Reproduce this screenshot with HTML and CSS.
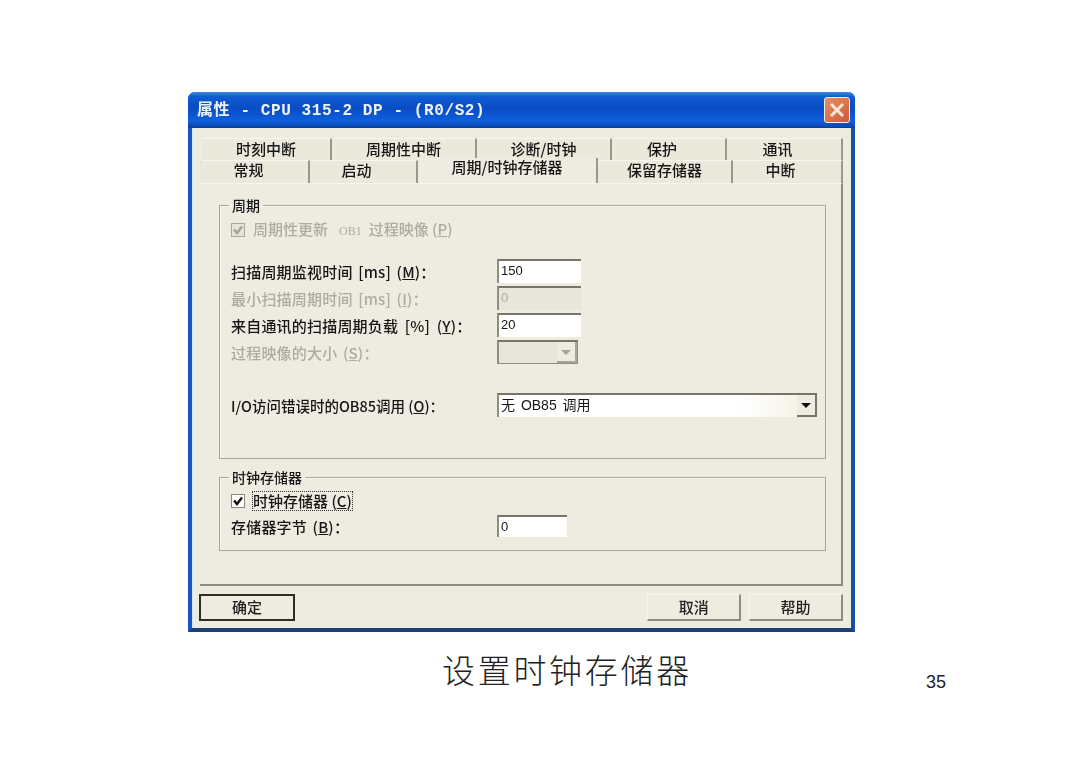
FILE: index.html
```html
<!DOCTYPE html>
<html lang="zh-CN">
<head>
    <meta charset="UTF-8">
    <title>设置时钟存储器</title>
    <link rel="stylesheet" href="styles.css">
</head>
<body>
    <div class="window">
        <div class="titlebar">
            <span class="title-text">属性 - CPU 315-2 DP - (R0/S2)</span>
            <div class="close-btn">
                <svg width="18" height="18" viewBox="0 0 18 18"><path d="M3 3 L15 15 M15 3 L3 15" stroke="#f6e6d8" stroke-width="3" fill="none"/></svg>
            </div>
        </div>
        <div class="window-body">
            <div class="tab-row tab-row-back">
                <div class="tab">时刻中断</div>
                <div class="tab">周期性中断</div>
                <div class="tab">诊断/时钟</div>
                <div class="tab tab-left">保护</div>
                <div class="tab tab-left">通讯</div>
            </div>
            <div class="tab-row tab-row-front">
                <div class="tab tab-left">常规</div>
                <div class="tab tab-left">启动</div>
                <div class="tab tab-active">周期/时钟存储器</div>
                <div class="tab">保留存储器</div>
                <div class="tab tab-left">中断</div>
            </div>
            <div class="panel">
                <fieldset class="group group-cycle">
                    <legend>周期</legend>
                    <div class="check-row disabled">
                        <span class="checkbox checkbox-off">
                            <svg width="14" height="14" viewBox="0 0 14 14"><path d="M3 6.5 L6 10 L11 3.5" stroke="#a5a296" stroke-width="2.4" fill="none"/></svg>
                        </span>
                        <span>周期性更新<span class="small">OB1</span>过程映像 (<u>P</u>)</span>
                    </div>
                    <div class="form-rows">
                        <div class="form-row">
                            <label>扫描周期监视时间 [ms] (<u>M</u>)：</label>
                            <div class="input input-wide">150</div>
                        </div>
                        <div class="form-row disabled">
                            <label>最小扫描周期时间 [ms] (<u>I</u>)：</label>
                            <div class="input input-wide input-off">0</div>
                        </div>
                        <div class="form-row">
                            <label class="label-wide">来自通讯的扫描周期负载 [%] (<u>Y</u>)：</label>
                            <div class="input input-wide">20</div>
                        </div>
                        <div class="form-row disabled">
                            <label>过程映像的大小 (<u>S</u>)：</label>
                            <div class="input combo-small input-off">
                                <span class="combo-btn combo-btn-off"></span>
                            </div>
                        </div>
                        <div class="form-row form-row-gap">
                            <label class="label-tight">I/O访问错误时的OB85调用 (<u>O</u>)：</label>
                            <div class="input combo-big">
                                无 OB85 调用
                                <span class="combo-btn"></span>
                            </div>
                        </div>
                    </div>
                </fieldset>
                <fieldset class="group group-clock">
                    <legend>时钟存储器</legend>
                    <div class="check-row">
                        <span class="checkbox">
                            <svg width="14" height="14" viewBox="0 0 14 14"><path d="M3 6.5 L6 10 L11 3.5" stroke="#111" stroke-width="2.4" fill="none"/></svg>
                        </span>
                        <span class="focused">时钟存储器 (<u>C</u>)</span>
                    </div>
                    <div class="form-row form-row-clock">
                        <label>存储器字节 (<u>B</u>)：</label>
                        <div class="input input-narrow">0</div>
                    </div>
                </fieldset>
            </div>
            <div class="button-row">
                <button class="btn btn-default">确定</button>
                <div class="button-spacer"></div>
                <button class="btn">取消</button>
                <button class="btn">帮助</button>
            </div>
        </div>
    </div>
    <div class="caption-row">
        <div class="caption">设置时钟存储器</div>
        <div class="page-num">35</div>
    </div>
</body>
</html>
```

FILE: styles.css
```css
html, body {
    margin: 0;
    padding: 0;
}

body {
    width: 1080px;
    height: 764px;
    overflow: hidden;
    background-color: #fff;
    padding-top: 92px;
    box-sizing: border-box;
    font-family: "Noto Sans CJK SC", "Liberation Sans", sans-serif;
    color: #161616;
}

.window {
    width: 667px;
    height: 540px;
    margin-left: 188px;
    box-sizing: border-box;
    border: 4px solid #1557c4;
    border-top: 0;
    border-bottom-color: #1d3f78;
    border-right-color: #1a4fa8;
    border-radius: 7px 7px 0 0;
    background-color: #eeebe0;
    display: flex;
    flex-direction: column;
    filter: blur(0.4px);
}

.titlebar {
    height: 36px;
    margin: 0 -4px;
    padding: 0 5px 0 9px;
    display: flex;
    justify-content: space-between;
    align-items: center;
    border-radius: 7px 7px 0 0;
    background: linear-gradient(#3d8be6 0, #0f5cd2 12%, #0a4cc4 45%, #0f5fdc 80%, #0b47b0 96%, #0a3a90 100%);
}

.title-text {
    font-family: "Liberation Mono", "Noto Sans CJK SC", monospace;
    font-weight: bold;
    font-size: 16px;
    letter-spacing: 0.6px;
    color: #eef4fb;
    padding-bottom: 4px;
}

.close-btn {
    width: 24px;
    height: 24px;
    border: 1px solid #f3ede4;
    border-radius: 3px;
    background: linear-gradient(135deg, #e69068, #cf5a35);
    display: flex;
    align-items: center;
    justify-content: center;
}

.window-body {
    flex: 1;
    padding: 10px 8px 0;
    display: flex;
    flex-direction: column;
    box-shadow: inset 1px 0 0 #d6e2f0;
}

.tab-row {
    display: grid;
    padding-left: 2px;
    font-size: 15px;
    font-weight: 500;
    text-align: center;
    width: 641px;
}

.tab-row-back {
    height: 22px;
    line-height: 19px;
    grid-template-columns: 130px 145px 135px 115px 116px;
}

.tab-row-front {
    height: 23px;
    line-height: 18px;
    grid-template-columns: 108px 108px 180px 135px 110px;
    background-color: #eae7db;
}

.tab {
    border-right: 2px solid #9a978b;
    box-sizing: border-box;
    background-color: #ebe8dc;
    border-top: 1px solid #f7f6f0;
}

.tab-left {
    padding-right: 13px;
}

.tab-active {
    background-color: #eeebe0;
    margin-top: -2px;
    border-top: 0;
}

.panel {
    height: 403px;
    box-sizing: border-box;
    padding: 13px 15px 0 19px;
    margin-right: 0;
    border-right: 2px solid #8f8c80;
    border-bottom: 2px solid #8f8c80;
    border-top: 1px solid #f6f5ef;
    display: flex;
    flex-direction: column;
    gap: 10px;
}

.group {
    margin: 0;
    padding: 7px 11px 0;
    border: 1px solid #a9a698;
    box-shadow: inset 1px 1px 0 #f7f6f0;
    font-size: 15px;
    font-weight: 500;
    min-width: 0;
}

.group legend {
    padding: 0 3px;
    margin-left: -2px;
    font-size: 14px;
    line-height: 16px;
}

.group-cycle {
    height: 262px;
    box-sizing: border-box;
}

.group-clock {
    height: 82px;
    box-sizing: border-box;
    padding-top: 6px;
}

.check-row {
    height: 20px;
    display: flex;
    align-items: center;
    gap: 8px;
    line-height: 20px;
}

.checkbox {
    width: 14px;
    height: 14px;
    flex-shrink: 0;
    background-color: #fff;
    border: 1px solid #8a887c;
    box-sizing: border-box;
    display: flex;
    align-items: center;
    justify-content: center;
}

.checkbox svg {
    flex-shrink: 0;
}

.checkbox-off {
    background-color: #e6e3d7;
    border-color: #aaa79a;
}

.focused {
    outline: 1px dotted #333;
    line-height: 18px;
}

.small {
    font-family: "Liberation Serif", serif;
    font-size: 12px;
    margin: 0 7px 0 11px;
}

.form-rows {
    margin-top: 19px;
    display: flex;
    flex-direction: column;
    gap: 3px;
}

.form-row {
    height: 24px;
    display: grid;
    grid-template-columns: 266px 1fr;
    align-items: center;
}

.form-row label {
    letter-spacing: 0.2px;
    word-spacing: 2px;
}

.form-row .label-wide {
    word-spacing: 3px;
}

.form-row .label-tight {
    letter-spacing: 0;
    word-spacing: 0;
    font-size: 14.5px;
}

.form-row-gap {
    margin-top: 26px;
}

.form-row-clock {
    margin-top: 3px;
}

.disabled {
    color: #aeaba0;
}

.input {
    height: 24px;
    box-sizing: border-box;
    background-color: #fff;
    border-top: 2px solid #77746a;
    border-left: 2px solid #8f8c80;
    font-family: "Liberation Sans", "Noto Sans CJK SC", sans-serif;
    font-size: 13px;
    font-weight: 400;
    line-height: 20px;
    padding-left: 2px;
    color: #161616;
    position: relative;
}

.input-wide {
    width: 84px;
}

.input-narrow {
    width: 70px;
    height: 22px;
    line-height: 19px;
}

.input-off {
    background-color: #e8e6da;
    color: #aeaba0;
}

.combo-small {
    width: 81px;
    border-right: 1px solid #8f8c80;
    border-bottom: 1px solid #8f8c80;
}

.combo-big {
    width: 320px;
    font-size: 14px;
    word-spacing: 2px;
    background: linear-gradient(90deg, #fff 75%, #f6f4ea 92%);
}

.combo-btn {
    position: absolute;
    right: 0;
    top: 0;
    bottom: 0;
    width: 20px;
    background-color: #eeebe0;
    border-right: 2px solid #77746a;
    border-bottom: 2px solid #77746a;
    box-sizing: border-box;
}

.combo-btn::after {
    content: "";
    position: absolute;
    left: 4px;
    top: 8px;
    border-left: 5px solid transparent;
    border-right: 5px solid transparent;
    border-top: 5px solid #111;
}

.combo-btn-off {
    border-color: #a8a598;
}

.combo-btn-off::after {
    border-top-color: #a8a598;
}

.button-row {
    display: flex;
    gap: 8px;
    margin-top: 8px;
    margin-left: -1px;
    padding-right: 0;
}

.button-spacer {
    width: 337px;
}

.btn {
    width: 94px;
    height: 27px;
    padding: 0 0 2px;
    border: 0;
    border-right: 2px solid #8f8c80;
    border-bottom: 2px solid #8f8c80;
    border-top: 1px solid #f7f6f0;
    border-left: 1px solid #f7f6f0;
    background-color: #eeebe0;
    font-family: inherit;
    font-size: 15px;
    font-weight: 500;
    color: #222;
}

.btn-default {
    width: 96px;
    border: 2px solid #2e2d28;
}

.caption-row {
    display: flex;
    align-items: flex-end;
    margin-left: 442px;
    margin-top: 14px;
}

.caption {
    font-size: 33px;
    letter-spacing: 2.7px;
    line-height: 46px;
    font-weight: 300;
    color: #222;
    width: 484px;
}

.page-num {
    font-family: "Liberation Sans", sans-serif;
    font-size: 18px;
    line-height: 24px;
    margin-bottom: -2px;
    color: #222;
}
```
